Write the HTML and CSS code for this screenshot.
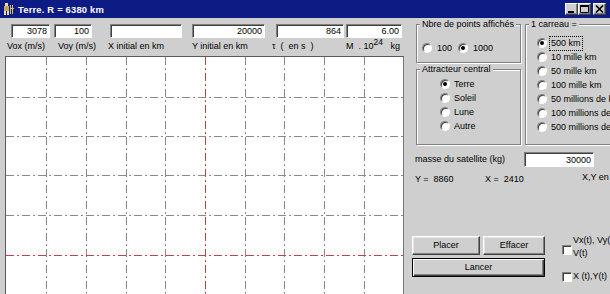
FILE: index.html
```html
<!DOCTYPE html>
<html lang="fr">
<head>
    <meta charset="UTF-8">
    <title>Terre. R = 6380 km</title>
    <link rel="stylesheet" href="styles.css">
</head>
<body>
    <div class="window">
        <div class="titlebar">
            <svg class="app-icon" viewBox="0 0 12 12">
                <rect x="2" y="0" width="3" height="3" fill="#e8dca8"/>
                <rect x="1" y="3" width="5" height="5" fill="#c8a858"/>
                <rect x="1" y="8" width="2" height="4" fill="#e8dca8"/>
                <rect x="4" y="8" width="2" height="4" fill="#e8dca8"/>
                <rect x="7" y="2" width="1" height="9" fill="#d8c078"/>
                <rect x="9" y="2" width="1" height="9" fill="#d8c078"/>
                <rect x="7" y="5" width="4" height="1" fill="#d8c078"/>
            </svg>
            <span class="title">Terre. R = 6380 km</span>
            <div class="controls">
                <span class="ctl">
                    <svg width="9" height="8" viewBox="0 0 9 8"><rect x="1" y="6" width="6" height="2" fill="#000"/></svg>
                </span>
                <span class="ctl">
                    <svg width="9" height="8" viewBox="0 0 9 8"><path d="M0.5 0.5h8v7h-8z" fill="none" stroke="#000"/><rect x="0" y="0" width="9" height="2" fill="#000"/></svg>
                </span>
                <span class="ctl close">
                    <svg width="9" height="8" viewBox="0 0 9 8"><path d="M1 0.5l7 7M8 0.5l-7 7" stroke="#000" stroke-width="1.6"/></svg>
                </span>
            </div>
        </div>

        <div class="client">
            <div class="plot">
                <div class="params">
                    <input class="field f-vox" value="3078">
                    <input class="field f-voy" value="100">
                    <input class="field f-x" value="">
                    <input class="field f-y" value="20000">
                    <input class="field f-tau" value="864">
                    <input class="field f-m" value="6.00">
                </div>
                <div class="labels">
                    <span class="lbl l-vox">Vox (m/s)</span>
                    <span class="lbl l-voy">Voy (m/s)</span>
                    <span class="lbl l-x">X initial en km</span>
                    <span class="lbl l-y">Y initial en km</span>
                    <span class="lbl l-tau">τ &nbsp;( &nbsp;en s &nbsp;)</span>
                    <span class="lbl l-m">M &nbsp;. 10<sup class="exp">24</sup> &nbsp; kg</span>
                </div>
                <div class="canvas">
                    <svg width="397" height="248" viewBox="0 0 397 248">
                        <g stroke="#8a8a8a" stroke-width="1" stroke-dasharray="8 3 2 3">
                            <line x1="40.5" y1="0" x2="40.5" y2="248"/>
                            <line x1="80.5" y1="0" x2="80.5" y2="248"/>
                            <line x1="120.5" y1="0" x2="120.5" y2="248"/>
                            <line x1="159.5" y1="0" x2="159.5" y2="248"/>
                            <line x1="239.5" y1="0" x2="239.5" y2="248"/>
                            <line x1="278.5" y1="0" x2="278.5" y2="248"/>
                            <line x1="318.5" y1="0" x2="318.5" y2="248"/>
                            <line x1="358.5" y1="0" x2="358.5" y2="248"/>
                            <line x1="0" y1="40.5" x2="397" y2="40.5"/>
                            <line x1="0" y1="79.5" x2="397" y2="79.5"/>
                            <line x1="0" y1="118.5" x2="397" y2="118.5"/>
                            <line x1="0" y1="158.5" x2="397" y2="158.5"/>
                        </g>
                        <g stroke="#c0404c" stroke-width="1" stroke-dasharray="8 3 2 3">
                            <line x1="199.5" y1="0" x2="199.5" y2="248"/>
                            <line x1="0" y1="198.5" x2="397" y2="198.5"/>
                        </g>
                    </svg>
                </div>
            </div>

            <div class="side">
                <div class="groups">
                    <div class="group-col">
                        <fieldset class="box points">
                            <legend>Nbre de points affichés</legend>
                            <div class="row-opts">
                                <label class="opt"><span class="radio"></span>100</label>
                                <label class="opt"><span class="radio on"></span>1000</label>
                            </div>
                        </fieldset>
                        <fieldset class="box attract">
                            <legend>Attracteur central</legend>
                            <div class="col-opts">
                                <label class="opt"><span class="radio on"></span>Terre</label>
                                <label class="opt"><span class="radio"></span>Soleil</label>
                                <label class="opt"><span class="radio"></span>Lune</label>
                                <label class="opt"><span class="radio"></span>Autre</label>
                            </div>
                        </fieldset>
                    </div>
                    <fieldset class="box carreau">
                        <legend>1 carreau =</legend>
                        <div class="col-opts">
                            <label class="opt"><span class="radio on"></span><span class="focus">500 km</span></label>
                            <label class="opt"><span class="radio"></span>10 mille km</label>
                            <label class="opt"><span class="radio"></span>50 mille km</label>
                            <label class="opt"><span class="radio"></span>100 mille km</label>
                            <label class="opt"><span class="radio"></span>50 millions de km</label>
                            <label class="opt"><span class="radio"></span>100 millions de km</label>
                            <label class="opt"><span class="radio"></span>500 millions de km</label>
                        </div>
                    </fieldset>
                </div>

                <div class="masse">
                    <span>masse du satellite (kg)</span>
                    <input class="field f-masse" value="30000">
                </div>

                <div class="coords">
                    <span>Y = &nbsp;8860</span>
                    <span>X = &nbsp;2410</span>
                    <span class="xy-unit">X,Y en km</span>
                </div>

                <div class="actions">
                    <div class="btns">
                        <button class="btn">Placer</button>
                        <button class="btn">Effacer</button>
                        <button class="btn default wide">Lancer</button>
                    </div>
                    <div class="checks">
                        <label class="check"><span class="checkbox"></span><span class="check-text">Vx(t), Vy(t), V(t)</span></label>
                        <label class="check"><span class="checkbox"></span><span class="check-text">X (t),Y(t)</span></label>
                    </div>
                </div>
            </div>
        </div>
    </div>
</body>
</html>
```

FILE: styles.css
```css
* {
    margin: 0;
    padding: 0;
    box-sizing: border-box;
}

body {
    font-family: "Liberation Sans", Arial, sans-serif;
    font-size: 9px;
    line-height: 11px;
    color: #000;
    background: #cfcfcf;
    overflow: hidden;
}

.window {
    width: 610px;
    height: 294px;
    background: #cfcfcf;
    overflow: hidden;
}

/* barre de titre */
.titlebar {
    height: 18px;
    background: #0c1c84;
    color: #fff;
    display: flex;
    align-items: center;
    padding: 0 4px 0 3px;
}

.app-icon {
    width: 12px;
    height: 12px;
    margin-right: 3px;
}

.title {
    font-weight: bold;
    font-size: 9.4px;
    letter-spacing: 0.2px;
}

.controls {
    margin-left: auto;
    display: flex;
}

.ctl {
    width: 13px;
    height: 12px;
    background: #cfcfcf;
    border: 1px solid;
    border-color: #fff #404040 #404040 #fff;
    box-shadow: inset -1px -1px 0 #808080;
    display: flex;
    align-items: center;
    justify-content: center;
}

.ctl svg {
    display: block;
}

.ctl.close {
    margin-left: 2px;
}

/* zone client */
.client {
    display: flex;
    height: 276px;
}

.plot {
    width: 405px;
    flex: none;
    padding-top: 6px;
}

.params {
    display: flex;
    padding-left: 11px;
}

.field {
    height: 14px;
    border: 1px solid;
    border-color: #808080 #fff #fff #808080;
    box-shadow: inset 1px 1px 0 #404040;
    background: #fff;
    font: inherit;
    text-align: right;
    padding: 0 2px 0 0;
    color: #000;
    outline: none;
}

.f-vox { width: 39px; }
.f-voy { width: 38px; margin-left: 4px; }
.f-x { width: 72px; margin-left: 18px; }
.f-y { width: 73px; margin-left: 10px; }
.f-tau { width: 68px; margin-left: 11px; }
.f-m { width: 56px; margin-left: 2px; }

.labels {
    display: flex;
    margin-top: 3px;
    padding-left: 7px;
    height: 11px;
    white-space: nowrap;
}

.l-vox { width: 51px; }
.l-voy { width: 50px; }
.l-x { width: 84px; }
.l-y { width: 80px; }
.l-tau { width: 74px; }

.exp {
    font-size: 8.5px;
    vertical-align: 4px;
    line-height: 0;
}

.canvas {
    margin: 4px 0 0 5px;
    width: 399px;
    height: 250px;
    border: 1px solid #5a5a5a;
    border-right-color: #777;
    background: #fff;
}

.canvas svg {
    display: block;
}

/* panneau de droite */
.side {
    flex: 1;
    padding: 1px 0 0 7px;
    display: flex;
    flex-direction: column;
    min-width: 0;
}

.groups {
    display: flex;
    gap: 4px;
    margin-left: 4px;
}

.group-col {
    width: 105px;
    flex: none;
    display: flex;
    flex-direction: column;
    gap: 1px;
}

.box {
    border: 1px solid #808080;
    box-shadow: inset 1px 1px 0 #fff, 1px 1px 0 #fff;
    min-width: 0;
}

.box legend {
    margin-left: 3px;
    padding: 0 2px;
    background: #cfcfcf;
    line-height: 11px;
    white-space: nowrap;
}

.points { height: 44px; }
.attract { height: 81px; }

.carreau {
    width: 100px;
    flex: none;
    height: 126px;
}

.row-opts {
    display: flex;
    gap: 6px;
    padding: 11px 0 0 5px;
}

.attract .col-opts {
    padding: 2px 0 0 23px;
}

.carreau .col-opts {
    padding: 6px 0 0 11px;
}

.opt {
    display: flex;
    align-items: center;
    gap: 4px;
    height: 14px;
    white-space: nowrap;
}

.row-opts .opt {
    gap: 5px;
}

.radio {
    width: 10px;
    height: 10px;
    flex: none;
    border-radius: 50%;
    background: #fff;
    border: 1px solid;
    border-color: #808080 #fff #fff #808080;
    box-shadow: inset 1px 1px 0 #404040;
    position: relative;
}

.radio.on::after {
    content: "";
    position: absolute;
    left: 2px;
    top: 2px;
    width: 4px;
    height: 4px;
    border-radius: 50%;
    background: #000;
}

.focus {
    outline: 1px dotted #000;
    outline-offset: 1px;
}

.masse {
    display: grid;
    grid-template-columns: 109px 70px;
    align-items: center;
    margin: 7px 0 0 3px;
}

.f-masse {
    height: 15px;
}

.coords {
    display: grid;
    grid-template-columns: 70px 97px auto;
    margin: 7px 0 0 3px;
    white-space: nowrap;
}

.xy-unit {
    margin-top: -2px;
}

.actions {
    display: flex;
    gap: 17px;
    margin-top: 51px;
}

.btns {
    display: grid;
    grid-template-columns: 68px 62px;
    grid-auto-rows: 19px;
    gap: 3px;
    width: 133px;
    flex: none;
}

.btn {
    font: inherit;
    color: #000;
    background: #cfcfcf;
    border: 1px solid;
    border-color: #fff #404040 #404040 #fff;
    box-shadow: inset -1px -1px 0 #808080, inset 1px 1px 0 #e4e4e4;
}

.btn.wide {
    grid-column: 1 / 3;
}

.btn.default {
    border: 1px solid #000;
    box-shadow: inset 1px 1px 0 #fff, inset -1px -1px 0 #404040, inset -2px -2px 0 #808080;
}

.checks {
    display: flex;
    flex-direction: column;
    gap: 10px;
    margin-top: -2px;
}

.check {
    display: flex;
    align-items: center;
    gap: 1px;
}

.checkbox {
    width: 10px;
    height: 10px;
    flex: none;
    background: #fff;
    border: 1px solid;
    border-color: #808080 #fff #fff #808080;
    box-shadow: inset 1px 1px 0 #404040;
}

.check:first-child .checkbox {
    margin-top: 5px;
}

.check-text {
    width: 54px;
    white-space: normal;
    line-height: 13px;
}

.check:last-child .check-text {
    white-space: nowrap;
}
```
